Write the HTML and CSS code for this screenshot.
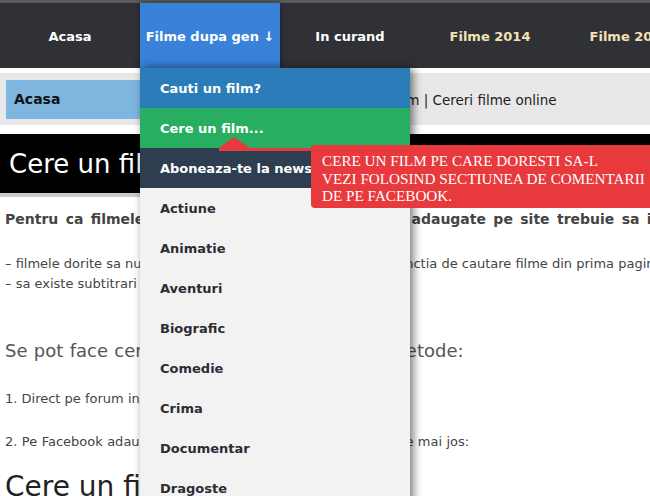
FILE: index.html
```html
<!DOCTYPE html>
<html lang="ro">
<head>
  <meta charset="UTF-8">
  <title>Cere un film</title>
  <link rel="stylesheet" href="styles.css">
</head>
<body>

<div class="page">
  <div class="topline"></div>

  <ul class="menu">
    <li><a href="#">Acasa</a></li>
    <li class="active">
      <a href="#">Filme dupa gen ↓</a>
      <ul class="dropdown">
        <li class="blue"><a href="#">Cauti un film?</a></li>
        <li class="green">
          <a href="#">Cere un film...</a>
          <div class="tooltip">CERE UN FILM PE CARE DORESTI SA-L<br>VEZI FOLOSIND SECTIUNEA DE COMENTARII<br>DE PE FACEBOOK.</div>
        </li>
        <li class="navy"><a href="#">Aboneaza-te la newsletter</a></li>
        <li><a href="#">Actiune</a></li>
        <li><a href="#">Animatie</a></li>
        <li><a href="#">Aventuri</a></li>
        <li><a href="#">Biografic</a></li>
        <li><a href="#">Comedie</a></li>
        <li><a href="#">Crima</a></li>
        <li><a href="#">Documentar</a></li>
        <li><a href="#">Dragoste</a></li>
      </ul>
    </li>
    <li><a href="#">In curand</a></li>
    <li class="year"><a href="#">Filme 2014</a></li>
    <li class="year"><a href="#">Filme 2015</a></li>
  </ul>

  <div class="crumbs">
    <a class="crumb-home" href="#">Acasa</a>
    <span class="crumb-rest">Cere un film | Cereri filme online</span>
  </div>

  <h1 class="title-bar">Cere un film</h1>

  <div class="content">
    <p class="lead">Pentru ca filmele cerute de catre voi sa poata fi adaugate pe site trebuie sa indeplineasca urmatoarele conditii:</p>
    <p class="list">– filmele dorite sa nu fie deja pe site (verificati mai intai cu functia de cautare filme din prima pagina)<br>– sa existe subtitrari pentru ele</p>
    <h2 class="sub">Se pot face cereri de filme prin cele doua metode:</h2>
    <p class="step">1. Direct pe forum in sectiunea dedicata cererilor</p>
    <p class="step">2. Pe Facebook adaugand un comentariu scurt in sectiunea de mai jos:</p>
    <h2 class="big">Cere un film</h2>
  </div>
</div>

</body>
</html>
```

FILE: styles.css
```css
html, body {
  margin: 0;
  overflow: hidden;
}
body {
  font-family: "DejaVu Sans", Verdana, sans-serif;
  color: #444;
  background: #fff;
}
.page {
  width: 960px;
}
.topline {
  height: 3px;
  background: #5a5a5a;
}

/* main menu */
.menu {
  display: flex;
  margin: 0;
  padding: 0;
  list-style: none;
  background: #303136;
  height: 65px;
}
.menu > li {
  position: relative;
  width: 140px;
  flex: none;
}
.menu > li > a {
  display: block;
  height: 64px;
  padding-top: 1px;
  line-height: 65px;
  text-align: center;
  color: #fff;
  font-size: 13px;
  font-weight: bold;
  text-decoration: none;
}
.menu > li.active > a {
  background: #3a81da;
  box-shadow: 0 0 6px rgba(0,0,0,0.45);
}
.menu > li.year > a {
  color: #f3e3b3;
}

/* dropdown */
.dropdown {
  position: absolute;
  top: 65px;
  left: 0;
  z-index: 5;
  width: 270px;
  margin: 0;
  padding: 0;
  list-style: none;
  background: #f2f2f2;
  box-shadow: 3px 0 9px rgba(0,0,0,0.55);
}
.dropdown li {
  position: relative;
  height: 40px;
}
.dropdown a {
  display: block;
  height: 39px;
  padding: 1px 0 0 20px;
  line-height: 40px;
  color: #2c2c34;
  font-size: 13px;
  font-weight: bold;
  text-decoration: none;
  white-space: nowrap;
  overflow: hidden;
}
.dropdown .blue { background: #2a7db9; }
.dropdown .green { background: #27ae60; }
.dropdown .navy { background: #2c3e50; }
.dropdown .blue a,
.dropdown .green a,
.dropdown .navy a {
  color: #fff;
}

/* tooltip next to "Cere un film..." */
.tooltip {
  position: absolute;
  left: 171px;
  top: 37px;
  z-index: 6;
  width: 360px;
  padding: 7px 11px 3px;
  background: #e8393d;
  border-radius: 4px;
  color: #fff;
  font-family: "Liberation Serif", "Times New Roman", serif;
  font-size: 15.2px;
  line-height: 17.5px;
  white-space: nowrap;
}
.tooltip::before {
  content: "";
  position: absolute;
  left: -92px;
  top: 3px;
  width: 92px;
  height: 3px;
  background: #e8393d;
}
.tooltip::after {
  content: "";
  position: absolute;
  left: -92px;
  top: -8px;
  border-left: 15px solid transparent;
  border-right: 16px solid transparent;
  border-bottom: 11px solid #e8393d;
}

/* breadcrumbs */
.crumbs {
  display: flex;
  align-items: center;
  margin-top: 5px;
  padding: 7px 0 6px 6px;
  background: #e8e8e8;
}
.crumb-home {
  width: 300px;
  height: 39px;
  line-height: 39px;
  padding-left: 8px;
  background: #7fb6e0;
  color: #111;
  font-size: 14px;
  font-weight: bold;
  text-decoration: none;
}
.crumb-rest {
  margin-left: 23px;
  color: #222;
  font-size: 13.5px;
}

.title-bar {
  margin: 9px 0 0;
  height: 59px;
  line-height: 60px;
  padding-left: 9px;
  background: #000;
  border-bottom: 4px solid #cbcbcb;
  color: #fff;
  font-size: 26px;
  font-weight: normal;
}

/* article */
.content {
  padding: 0 5px;
}
.lead {
  margin: 12px 0 0;
  font-size: 14px;
  font-weight: bold;
  line-height: 20px;
  word-spacing: 2.5px;
  white-space: nowrap;
}
.list {
  margin: 25px 0 0;
  font-size: 13px;
  line-height: 20px;
  white-space: nowrap;
}
.sub {
  margin: 45px 0 0;
  font-size: 18px;
  font-weight: normal;
  line-height: 24px;
  word-spacing: 0.6px;
  color: #555;
  white-space: nowrap;
}
.step {
  margin: 26px 0 0;
  font-size: 13px;
  line-height: 20px;
  white-space: nowrap;
}
.step + .step {
  margin-top: 23px;
  word-spacing: 0.3px;
}
.big {
  margin: 18px 0 0;
  font-size: 28px;
  font-weight: normal;
  line-height: 34px;
  color: #222;
}
```
